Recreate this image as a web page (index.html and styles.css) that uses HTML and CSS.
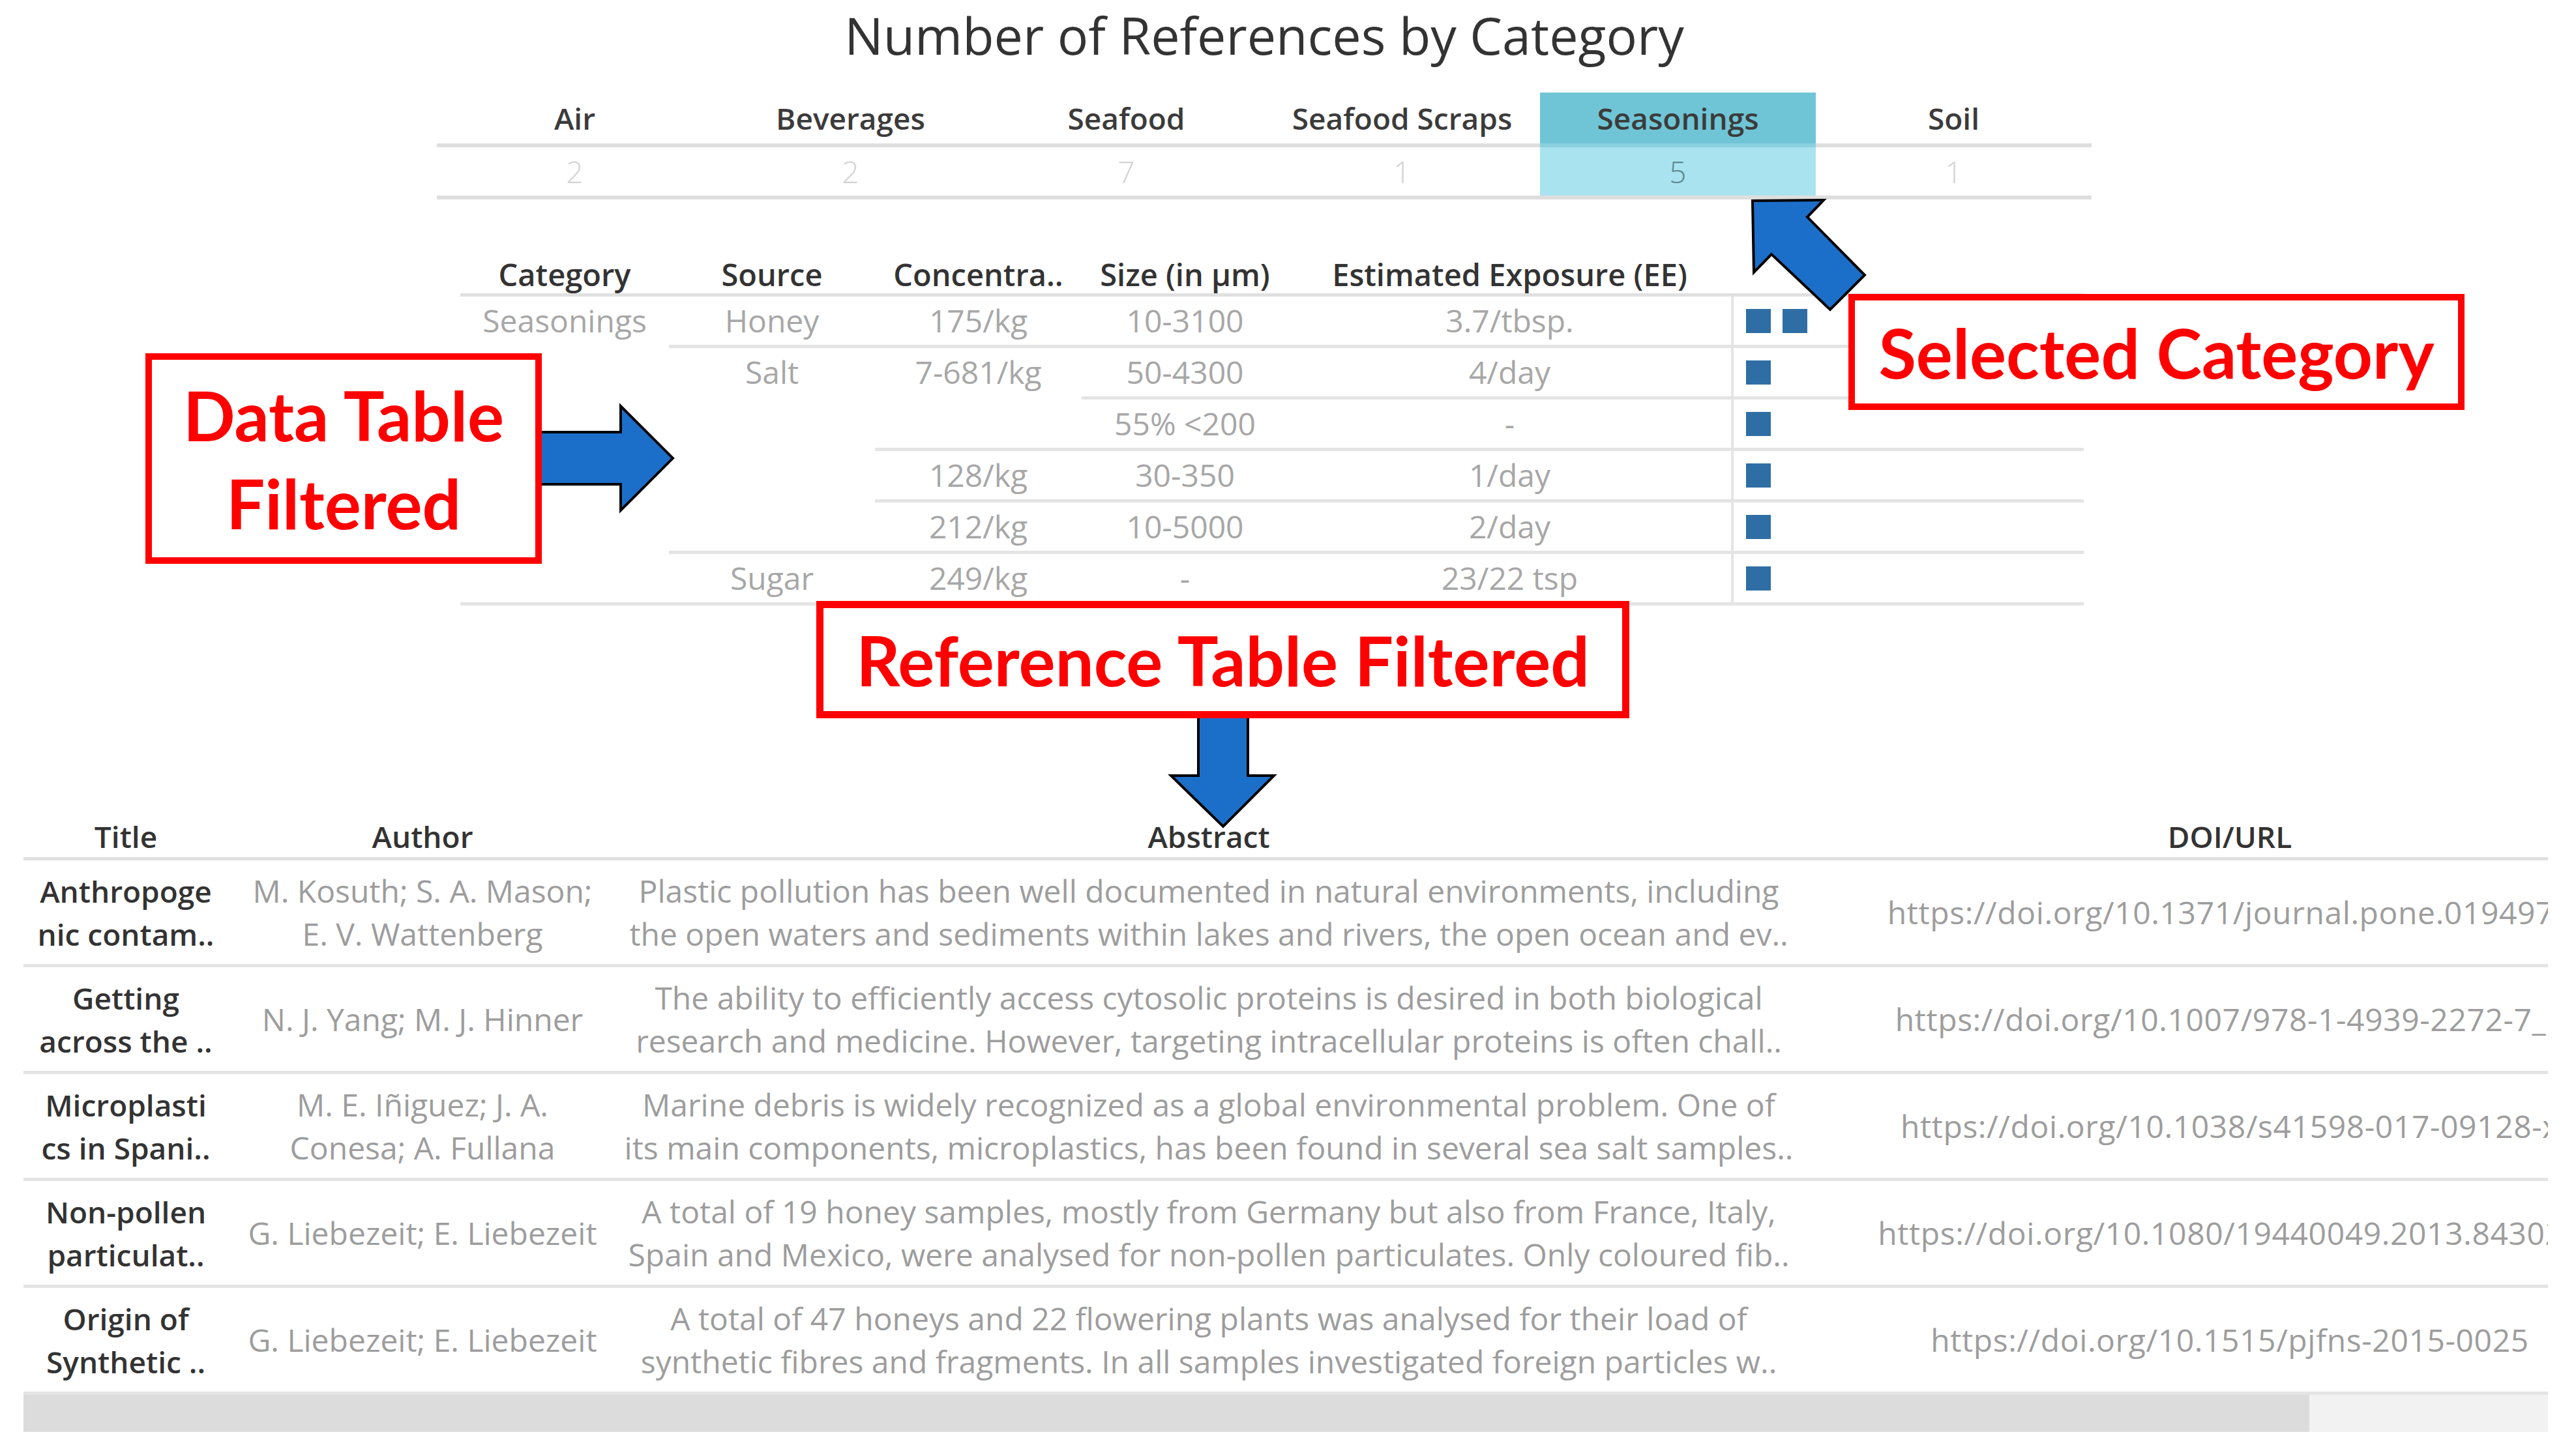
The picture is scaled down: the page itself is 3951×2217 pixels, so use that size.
FILE: index.html
```html
<!DOCTYPE html>
<html lang="en">
<head>
<meta charset="utf-8">
<title>Number of References by Category</title>
<link rel="stylesheet" href="styles.css">
</head>
<body>
<main class="dash">
  <section class="top">
    <h1 class="title">Number of References by Category</h1>
    <div class="catbar">
      <div class="cat-head">Air</div>
      <div class="cat-head">Beverages</div>
      <div class="cat-head">Seafood</div>
      <div class="cat-head">Seafood Scraps</div>
      <div class="cat-head is-selected">Seasonings</div>
      <div class="cat-head">Soil</div>
      <div class="cat-val">2</div>
      <div class="cat-val">2</div>
      <div class="cat-val">7</div>
      <div class="cat-val">1</div>
      <div class="cat-val is-selected">5</div>
      <div class="cat-val">1</div>
    </div>
  </section>

  <section class="dt">
    <div class="dh">Category</div>
    <div class="dh">Source</div>
    <div class="dh">Concentra..</div>
    <div class="dh">Size (in µm)</div>
    <div class="dh">Estimated Exposure (EE)</div>
    <div class="dh"></div>

    <div class="dc span6">Seasonings</div>
    <div class="dc">Honey</div>
    <div class="dc">175/kg</div>
    <div class="dc">10-3100</div>
    <div class="dc">3.7/tbsp.</div>
    <div class="dc bars"><span class="sq"></span><span class="sq"></span></div>

    <div class="dc span4">Salt</div>
    <div class="dc span2">7-681/kg</div>
    <div class="dc">50-4300</div>
    <div class="dc">4/day</div>
    <div class="dc bars"><span class="sq"></span></div>

    <div class="dc">55% &lt;200</div>
    <div class="dc">-</div>
    <div class="dc bars"><span class="sq"></span></div>

    <div class="dc">128/kg</div>
    <div class="dc">30-350</div>
    <div class="dc">1/day</div>
    <div class="dc bars"><span class="sq"></span></div>

    <div class="dc">212/kg</div>
    <div class="dc">10-5000</div>
    <div class="dc">2/day</div>
    <div class="dc bars"><span class="sq"></span></div>

    <div class="dc">Sugar</div>
    <div class="dc">249/kg</div>
    <div class="dc">-</div>
    <div class="dc">23/22 tsp</div>
    <div class="dc bars"><span class="sq"></span></div>
  </section>

  <section class="rt-wrap">
    <div class="rt">
      <div class="rh">Title</div>
      <div class="rh">Author</div>
      <div class="rh">Abstract</div>
      <div class="rh">DOI/URL</div>

      <div class="rc rc-title">Anthropoge<br>nic contam..</div>
      <div class="rc">M. Kosuth; S. A. Mason;<br>E. V. Wattenberg</div>
      <div class="rc">Plastic pollution has been well documented in natural environments, including<br>the open waters and sediments within lakes and rivers, the open ocean and ev..</div>
      <div class="rc rc-url">https://doi.org/10.1371/journal.pone.0194970</div>

      <div class="rc rc-title">Getting<br>across the ..</div>
      <div class="rc">N. J. Yang; M. J. Hinner</div>
      <div class="rc">The ability to efficiently access cytosolic proteins is desired in both biological<br>research and medicine. However, targeting intracellular proteins is often chall..</div>
      <div class="rc rc-url">https://doi.org/10.1007/978-1-4939-2272-7_1</div>

      <div class="rc rc-title">Microplasti<br>cs in Spani..</div>
      <div class="rc">M. E. Iñiguez; J. A.<br>Conesa; A. Fullana</div>
      <div class="rc">Marine debris is widely recognized as a global environmental problem. One of<br>its main components, microplastics, has been found in several sea salt samples..</div>
      <div class="rc rc-url">https://doi.org/10.1038/s41598-017-09128-x</div>

      <div class="rc rc-title">Non-pollen<br>particulat..</div>
      <div class="rc">G. Liebezeit; E. Liebezeit</div>
      <div class="rc">A total of 19 honey samples, mostly from Germany but also from France, Italy,<br>Spain and Mexico, were analysed for non-pollen particulates. Only coloured fib..</div>
      <div class="rc rc-url">https://doi.org/10.1080/19440049.2013.843025</div>

      <div class="rc rc-title">Origin of<br>Synthetic ..</div>
      <div class="rc">G. Liebezeit; E. Liebezeit</div>
      <div class="rc">A total of 47 honeys and 22 flowering plants was analysed for their load of<br>synthetic fibres and fragments. In all samples investigated foreign particles w..</div>
      <div class="rc rc-url">https://doi.org/10.1515/pjfns-2015-0025</div>
    </div>
    <div class="scroll"><div class="thumb"></div><div class="track"></div></div>
  </section>

  <svg class="arrow arrow-right" viewBox="0 0 212 170" width="212" height="170">
    <polygon points="0,45 126,45 126,5 206,85 126,165 126,125 0,125" />
  </svg>
  <svg class="arrow arrow-up" viewBox="0 0 190 185" width="190" height="185">
    <polygon points="8,8 117,7 92,33 180,122 127,175 37,90 10,118" />
  </svg>
  <svg class="arrow arrow-down" viewBox="0 0 170 180" width="170" height="180">
    <polygon points="48,0 124,0 124,95 164,95 86,173 6,95 48,95" />
  </svg>

  <div class="note note-data">Data Table<br>Filtered</div>
  <div class="note note-sel">Selected Category</div>
  <div class="note note-ref">Reference Table Filtered</div>
</main>
</body>
</html>
```

FILE: styles.css
```css
html, body {
  margin: 0;
  padding: 0;
}
body {
  width: 3951px;
  height: 2217px;
  overflow: hidden;
  background: #ffffff;
  font-family: "Open Sans", "Liberation Sans", sans-serif;
}
.dash {
  position: relative;
  padding-top: 4px;
  height: 2213px;
}

/* ---------- title + category bar ---------- */
.top {
  width: 2538px;
  margin-left: 670px;
}
.title {
  margin: 0;
  font-size: 79px;
  font-weight: 400;
  line-height: 100px;
  text-align: center;
  color: #333333;
}
.catbar {
  margin-top: 38px;
  display: grid;
  grid-template-columns: repeat(6, 1fr);
}
.cat-head {
  height: 78px;
  border-bottom: 6px solid #dedede;
  display: flex;
  align-items: center;
  justify-content: center;
  font-size: 46px;
  font-weight: 600;
  color: #3b3b3b;
  line-height: 1;
}
.cat-head.is-selected {
  background: #6fc5d6;
  border-bottom-color: #8ad0de;
}
.cat-val {
  height: 74px;
  border-bottom: 6px solid #dedede;
  display: flex;
  align-items: center;
  justify-content: center;
  font-size: 46px;
  font-weight: 300;
  color: #d3d3d3;
  line-height: 1;
}
.cat-val.is-selected {
  background: #a9e3f0;
  color: #5e8790;
}

/* ---------- data table ---------- */
.dt {
  margin-top: 86px;
  margin-left: 706px;
  display: grid;
  grid-template-columns: 320px 316px 317px 317px 679px 541px;
  grid-template-rows: 63px repeat(6, 79px);
  font-size: 48px;
}
.dh {
  border-bottom: 5px solid #e0e0e0;
  display: flex;
  align-items: center;
  justify-content: center;
  font-size: 47px;
  font-weight: 600;
  color: #333333;
  line-height: 1;
  white-space: nowrap;
}
.dc {
  border-bottom: 5px solid #e4e4e4;
  text-align: center;
  line-height: 74px;
  color: #a7a7a7;
  white-space: nowrap;
}
.span6 { grid-row: span 6; }
.span4 { grid-row: span 4; }
.span2 { grid-row: span 2; }
.bars {
  border-left: 4px solid #e4e4e4;
  display: flex;
  align-items: center;
  gap: 18px;
  padding-left: 19px;
}
.sq {
  display: block;
  width: 38px;
  height: 37px;
  background: #2f6ea5;
}

/* ---------- reference table ---------- */
.rt-wrap {
  margin-top: 321px;
  margin-left: 36px;
  width: 3872px;
  overflow: hidden;
}
.rt {
  display: grid;
  grid-template-columns: 314px 596px 1816px 1316px;
  width: 4042px;
  font-size: 48px;
}
.rh {
  height: 65px;
  border-bottom: 5px solid #e0e0e0;
  display: flex;
  align-items: center;
  justify-content: center;
  font-size: 46px;
  font-weight: 600;
  color: #333333;
  line-height: 1;
}
.rc {
  height: 159px;
  border-bottom: 5px solid #e4e4e4;
  display: flex;
  align-items: center;
  justify-content: center;
  text-align: center;
  line-height: 66px;
  color: #9d9d9d;
  white-space: nowrap;
}
.rc-title {
  font-size: 46px;
  color: #333333;
  font-weight: 600;
}
.rc-url {
  letter-spacing: 0.6px;
}
.scroll {
  display: flex;
  height: 57px;
}
.thumb {
  width: 3506px;
  background: #dcdcdc;
}
.track {
  flex: 1;
  background: #f2f2f2;
}

/* ---------- annotations ---------- */
.arrow {
  position: absolute;
  overflow: visible;
}
.arrow polygon {
  fill: #1c6fc9;
  stroke: #000000;
  stroke-width: 4;
  stroke-linejoin: miter;
}
.arrow-right { left: 826px; top: 618px; }
.arrow-up { left: 2680px; top: 300px; }
.arrow-down { left: 1790px; top: 1095px; }

.note {
  position: absolute;
  box-sizing: border-box;
  border: 10px solid #ff0000;
  background: #ffffff;
  display: flex;
  align-items: center;
  justify-content: center;
  text-align: center;
  font-family: "Lato", "Liberation Sans", sans-serif;
  font-weight: 700;
  font-size: 105px;
  line-height: 135px;
  color: #ff0000;
  white-space: nowrap;
}
.note-data {
  left: 223px;
  top: 542px;
  width: 608px;
  height: 323px;
}
.note-sel {
  left: 2835px;
  top: 451px;
  width: 945px;
  height: 178px;
}
.note-ref {
  left: 1252px;
  top: 922px;
  width: 1247px;
  height: 180px;
  border-width: 11px;
}
```
